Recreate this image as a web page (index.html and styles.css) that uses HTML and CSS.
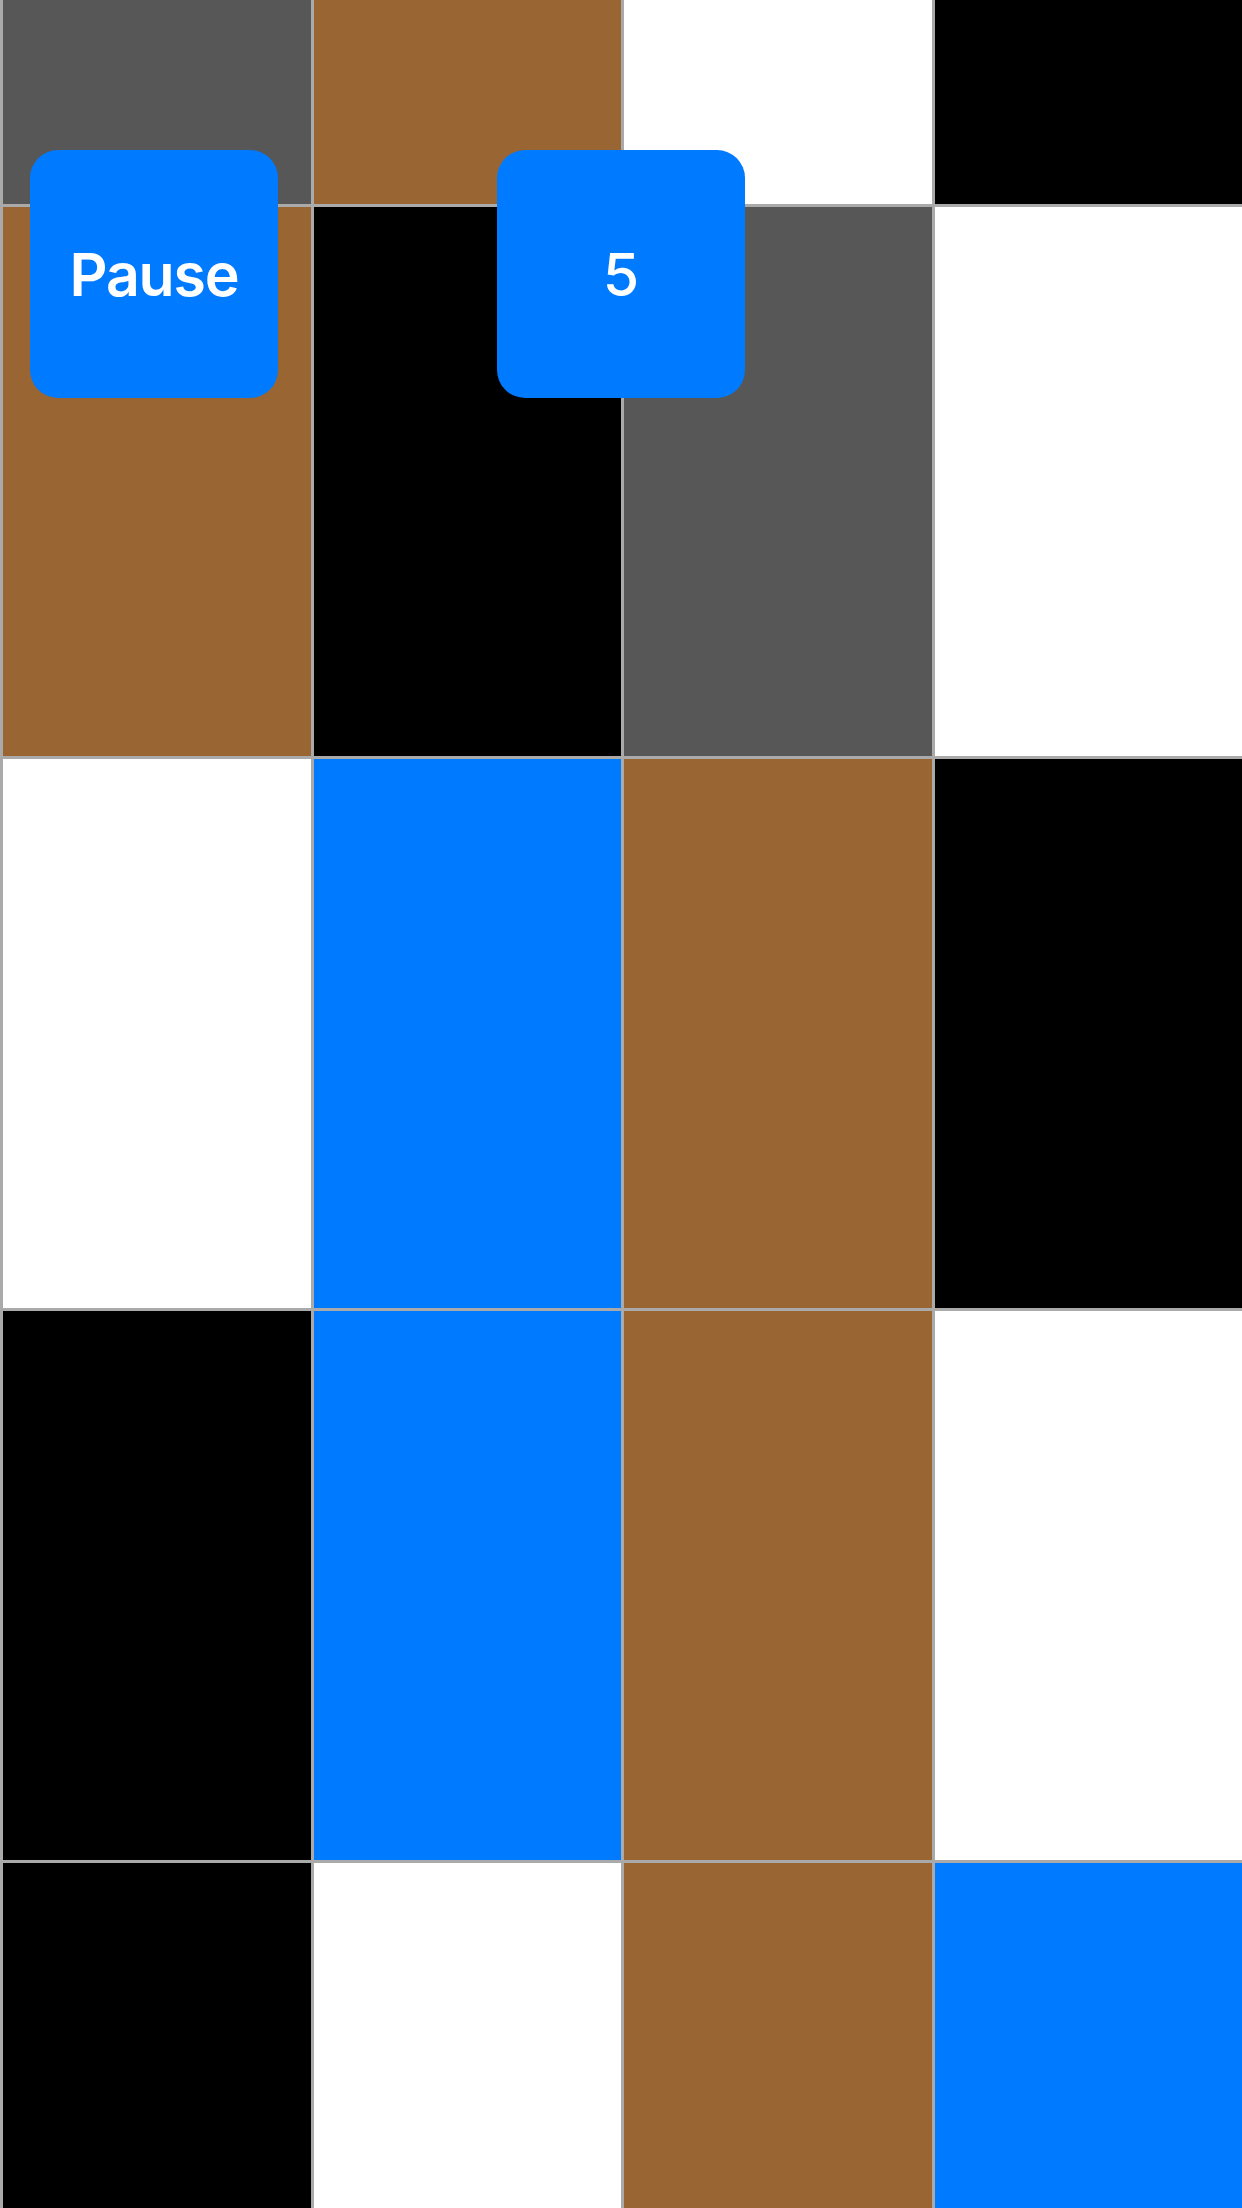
FILE: index.html
```html
<!DOCTYPE html>
<html lang="en">
<head>
<meta charset="utf-8">
<title>Tiles</title>
<link rel="stylesheet" href="styles.css">
</head>
<body>
<div class="screen">
  <div class="board">
    <div class="tile gray"></div><div class="tile brown"></div><div class="tile white"></div><div class="tile black"></div>
    <div class="tile brown"></div><div class="tile black"></div><div class="tile gray"></div><div class="tile white"></div>
    <div class="tile white"></div><div class="tile blue"></div><div class="tile brown"></div><div class="tile black"></div>
    <div class="tile black"></div><div class="tile blue"></div><div class="tile brown"></div><div class="tile white"></div>
    <div class="tile black"></div><div class="tile white"></div><div class="tile brown"></div><div class="tile blue"></div>
  </div>
  <div class="controls">
    <button class="btn btn-pause">Pause</button>
    <button class="btn btn-count">5</button>
  </div>
</div>
</body>
</html>
```
FILE: styles.css
```css
html, body {
  margin: 0;
  padding: 0;
  background: #ffffff;
}
.screen {
  position: relative;
  width: 1242px;
  height: 2208px;
  overflow: hidden;
}
.board {
  display: grid;
  grid-template-columns: repeat(4, 1fr);
  grid-auto-rows: 552px;
  margin-top: -348px;
}
.tile {
  box-sizing: border-box;
  border-left: 3px solid #aaaaaa;
  border-top: 3px solid #aaaaaa;
}
.gray { background: #575757; }
.brown { background: #996633; }
.white { background: #ffffff; }
.black { background: #000000; }
.blue { background: #007aff; }
.controls {
  position: absolute;
  top: 150px;
  left: 30px;
  display: flex;
  gap: 219px;
}
.btn {
  width: 248px;
  height: 248px;
  border: none;
  border-radius: 28px;
  background: #007aff;
  color: #ffffff;
  font-family: Inter, "Noto Sans", sans-serif;
  font-size: 59px;
  font-weight: 600;
  letter-spacing: -1.2px;
  padding: 0;
  display: flex;
  align-items: center;
  justify-content: center;
}
.btn-count {
  font-weight: 500;
  letter-spacing: 0;
}
```
